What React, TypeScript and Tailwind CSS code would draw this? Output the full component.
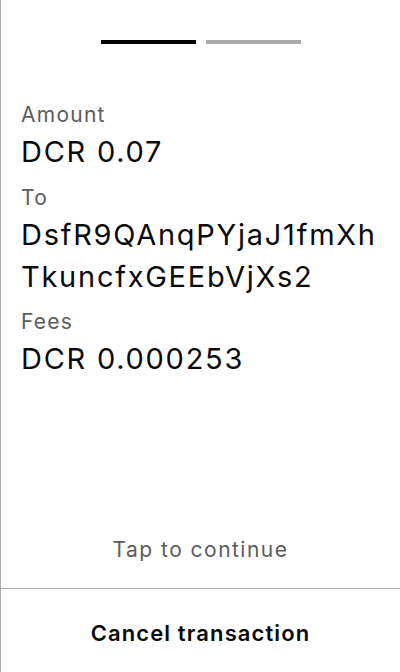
import React from "react";

export default function App() {
  const font = { fontFamily: "Inter, 'Noto Sans', sans-serif" };
  return (
    <div
      className="w-[400px] h-[672px] flex flex-col bg-white border-l border-[#ababab] overflow-hidden"
      style={font}
    >
      <div className="pt-[40px] flex justify-center gap-[10px]">
        <div className="w-[95px] h-[4px] bg-black" />
        <div className="w-[95px] h-[4px] bg-[#aaaaaa]" />
      </div>

      <div className="mt-[55px] pl-[20px] pr-[20px] flex flex-col">
        <div className="text-[21px] leading-[32px] tracking-[0.06em] text-[#5c5c5c]">Amount</div>
        <div className="text-[29px] leading-[42px] tracking-[0.06em] text-[#0a0a0a]">DCR 0.07</div>
        <div className="mt-[9px] text-[21px] leading-[32px] tracking-[0.06em] text-[#5c5c5c]">To</div>
        <div className="text-[29px] leading-[42px] tracking-[0.06em] text-[#0a0a0a] break-all">
          DsfR9QAnqPYjaJ1fmXhTkuncfxGEEbVjXs2
        </div>
        <div className="mt-[8px] text-[21px] leading-[32px] tracking-[0.06em] text-[#5c5c5c]">Fees</div>
        <div className="text-[29px] leading-[42px] tracking-[0.06em] text-[#0a0a0a]">DCR 0.000253</div>
      </div>

      <div className="flex-1" />

      <div className="text-center text-[21px] leading-[28px] tracking-[0.07em] text-[#5c5c5c] pb-[24px]">
        Tap to continue
      </div>
      <div className="border-t border-[#ababab] pt-[30px] pb-[25px] text-center text-[22px] leading-[28px] tracking-[0.05em] font-semibold text-[#0a0a0a]">
        Cancel transaction
      </div>
    </div>
  );
}
